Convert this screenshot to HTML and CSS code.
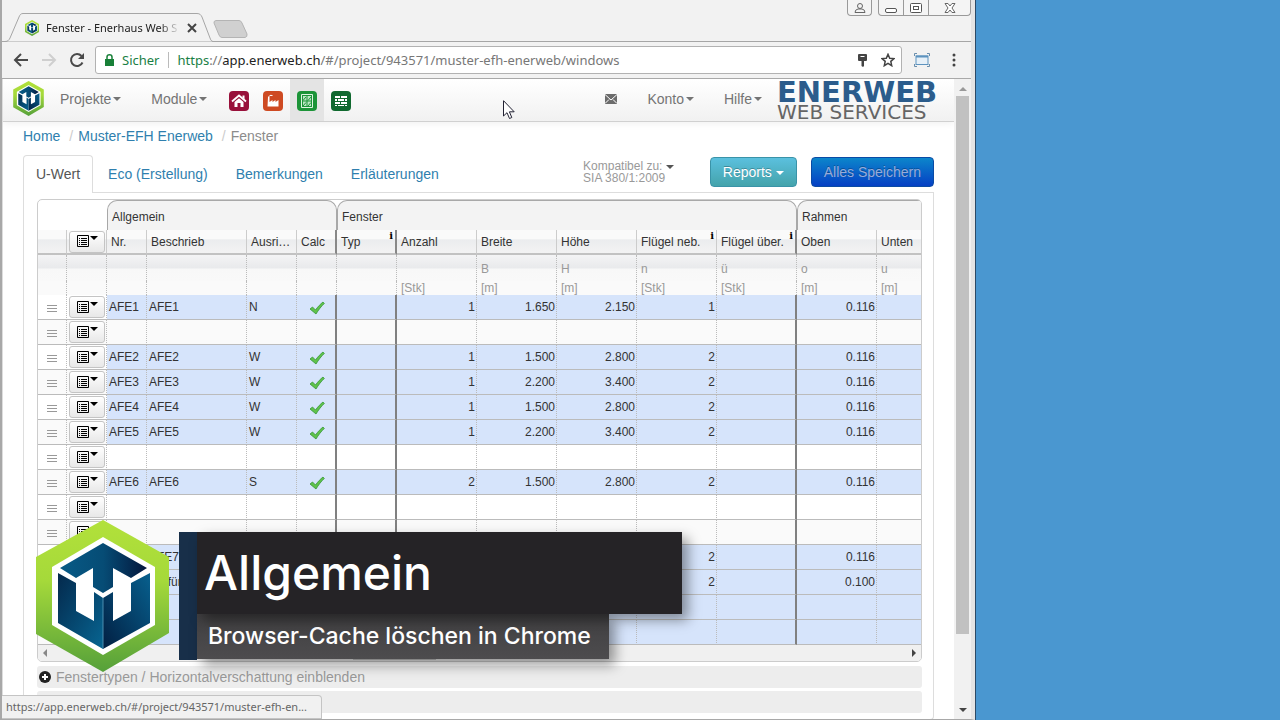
FILE: index.html
```html
<!DOCTYPE html>
<html lang="de">
<head>
<meta charset="utf-8">
<title>Fenster - Enerhaus Web Services</title>
<link rel="stylesheet" href="styles.css">
</head>
<body>
<svg class="defs" aria-hidden="true">
  <defs>
    <linearGradient id="green" x1="0" y1="0" x2="0" y2="1"><stop offset="0" stop-color="#b2e13a"/><stop offset=".4" stop-color="#a5d93a"/><stop offset="1" stop-color="#55a03a"/></linearGradient>
    <linearGradient id="top" x1="0" y1="0" x2="1" y2="0"><stop offset="0" stop-color="#075a86"/><stop offset=".5" stop-color="#064c75"/><stop offset="1" stop-color="#03163c"/></linearGradient>
    <linearGradient id="left" x1="0" y1="0" x2="1" y2="1"><stop offset="0" stop-color="#04294c"/><stop offset="1" stop-color="#076592"/></linearGradient>
    <linearGradient id="right" x1="0" y1="1" x2="1" y2="0"><stop offset="0" stop-color="#021f42"/><stop offset="1" stop-color="#07608e"/></linearGradient>
  </defs>
  <symbol id="logo" viewBox="0 0 133 152">
    <path fill="url(#green)" d="M67 0 133 37V113L67 152 0 114V37z"/>
    <path fill="#fff" d="M67 17 119 47V105L67 135 16 105V47z"/>
    <path fill="url(#top)" d="M67 23 111 48 95 58 77 48V67L67 73 57 67V48L40 58 24 48z"/>
    <path fill="url(#left)" d="M22 53 40 63V91L58 101V72L67 78V129L22 103z"/>
    <path fill="url(#right)" d="M114 53 95 63V91L77 101V72L67 78V129L114 103z"/>
    <path d="M67 78V129" stroke="#4b8eb0" stroke-width="1"/>
  </symbol>
  <symbol id="list" viewBox="0 0 22 13">
    <path fill="none" stroke="#000" d="M.5 1.500h11v11H.5z"/>
    <path stroke="#000" d="M2 4.500h1M4 4.500h6M2 6.500h1M4 6.500h6M2 8.500h1M4 8.500h6M2 10.500h1M4 10.500h6"/>
    <path d="M13 2h8l-4 4z"/>
  </symbol>
  <symbol id="grip" viewBox="0 0 10 9"><path stroke="#999" stroke-width="1" d="M0 1.500h10M0 4.500h10M0 7.500h10"/></symbol>
  <symbol id="check" viewBox="0 0 16 14"><path fill="#5fc24a" stroke="#35953a" stroke-width=".8" d="M1 8 3.500 6 6.500 9C9 5.500 11.500 3 14 1L15.300 2.500C12 5.500 9.500 9 7 13z"/></symbol>
  <symbol id="plus" viewBox="0 0 12 12"><circle cx="6" cy="6" r="6" fill="#222"/><path stroke="#fff" stroke-width="2" d="M3 6h6M6 3v6"/></symbol>
</svg>

<div class="desktop">
<div class="window">
  <header class="titlebar">
    <div class="tab">
      <svg class="tab-shape" viewBox="0 0 210 29" preserveAspectRatio="none" aria-hidden="true"><path fill="#f2f2f2" stroke="#a6a6a6" d="M0 28.500H2C5 28.500 6 27 7 25L16 4C17 1.500 18 .5 20 .5H194C197 .5 198 2 199 4L207 25C208 28 209 28.500 211 28.500"/></svg>
      <svg class="favicon" aria-hidden="true"><use href="#logo"/></svg>
      <span class="tab-title">Fenster - Enerhaus Web S</span>
      <button class="plain" aria-label="Tab schliessen"><svg width="10" height="10" viewBox="0 0 10 10"><path stroke="#444" stroke-width="2" d="M1 1 9 9M9 1 1 9"/></svg></button>
    </div>
    <button class="plain new-tab" aria-label="Neuer Tab"><svg width="35" height="18" viewBox="0 0 35 18"><path fill="#d0d0d0" stroke="#b4b4b4" d="M3 .5H26Q28 .5 29 3L34 14Q34.500 17 32 17.500H9Q7 17.500 6 15L1 3Q.5 1 3 .5z"/></svg></button>
    <div class="win-controls">
      <button class="win-btn user" aria-label="Benutzer"><svg width="12" height="12" viewBox="0 0 12 12" fill="none" stroke="#666"><circle cx="6" cy="4" r="2.500"/><path d="M1 10.500Q1 7.500 4 7H8Q11 7.500 11 10.500z"/></svg></button>
      <div class="win-group">
        <button class="win-btn" aria-label="Minimieren"><svg width="12" height="12" viewBox="0 0 12 12"><rect x=".5" y="6.500" width="11" height="4" rx="1.500" fill="#fff" stroke="#555"/></svg></button>
        <button class="win-btn" aria-label="Maximieren"><svg width="12" height="12" viewBox="0 0 12 12" fill="#fff" stroke="#555"><rect x=".5" y="1.500" width="11" height="9" rx="1"/><rect x="3.500" y="4.500" width="5" height="3"/></svg></button>
        <button class="win-btn close" aria-label="Schliessen"><svg width="12" height="12" viewBox="0 0 12 12" fill="#fff" stroke="#666"><path d="M1 1.500H4L6 4 8 1.500H11L8 6 11 10.500H8L6 8 4 10.500H1L4 6z"/></svg></button>
      </div>
    </div>
  </header>

  <div class="toolbar">
    <button class="plain" aria-label="Zurück"><svg width="16" height="16" viewBox="0 0 16 16" fill="none" stroke="#4a4a4a" stroke-width="2"><path d="M15 8H2M8 2 2 8l6 6"/></svg></button>
    <button class="plain" aria-label="Vorwärts"><svg width="16" height="16" viewBox="0 0 16 16" fill="none" stroke="#cfcfcf" stroke-width="2"><path d="M1 8H14M8 2l6 6-6 6"/></svg></button>
    <button class="plain" aria-label="Neu laden"><svg width="16" height="16" viewBox="0 0 16 16"><path fill="none" stroke="#4a4a4a" stroke-width="2" d="M13.500 10.500A6 6 0 1 1 12.500 4"/><path fill="#4a4a4a" d="M15 1V7H9z"/></svg></button>
    <div class="omnibox">
      <svg width="9" height="12" viewBox="0 0 9 12" aria-hidden="true"><path fill="#188038" d="M0 5H9V12H0z"/><path fill="none" stroke="#188038" stroke-width="1.500" d="M2 5V3A2.500 2.200 0 0 1 7 3V5"/></svg>
      <span class="secure">Sicher</span>
      <span class="url"><span class="scheme">https</span>://<span class="host">app.enerweb.ch</span>/#/project/943571/muster-efh-enerweb/windows</span>
      <button class="plain" aria-label="Passwort"><svg width="9" height="13" viewBox="0 0 9 13"><path fill="#444" d="M1 0H8Q9 0 9 1V6Q9 7 8 7H6V12L5 13 3.500 12V7H1Q0 7 0 6V1Q0 0 1 0z"/><path stroke="#fff" d="M2.500 2.500h4"/></svg></button>
      <button class="plain" aria-label="Lesezeichen"><svg width="14" height="14" viewBox="0 0 14 14"><path fill="none" stroke="#444" stroke-width="1.500" d="M7 1.300 8.700 5.200 13 5.600 9.800 8.400 10.700 12.700 7 10.400 3.300 12.700 4.200 8.400 1 5.600 5.300 5.200z"/></svg></button>
    </div>
    <button class="plain" aria-label="Bildschirmfoto"><svg width="16" height="14" viewBox="0 0 16 14" fill="none"><rect x="2" y="3" width="12" height="8.500" fill="#e6f0f8" stroke="#5d93bf"/><path stroke="#5d93bf" stroke-width="2" d="M2 3.500h12"/><path stroke="#6a8eac" d="M.5 3V.5H3M13 .5h2.500V3M.5 11v2.500H3M13 13.500h2.500V11"/></svg></button>
    <button class="plain menu" aria-label="Menü"><svg width="4" height="14" viewBox="0 0 4 14" fill="#444"><circle cx="2" cy="2" r="1.500"/><circle cx="2" cy="7" r="1.500"/><circle cx="2" cy="12" r="1.500"/></svg></button>
  </div>

  <div class="viewport">
    <div class="page">
      <nav class="navbar">
        <a href="#" class="brand" aria-label="Startseite"><svg width="31" height="35"><use href="#logo"/></svg></a>
        <a href="#" class="nav-item">Projekte<i class="caret"></i></a>
        <a href="#" class="nav-item">Module<i class="caret"></i></a>
        <a href="#" class="nav-icon" aria-label="Haus"><svg width="20" height="20" viewBox="0 0 20 20"><rect width="20" height="20" rx="4" fill="#98103a"/><path fill="none" stroke="#fff" stroke-width="1.800" d="M3 10.500 10 4.500l7 6"/><path fill="#fff" d="M13.500 4.500h2v4l-2-2zM5.500 11 10 7.200l4.500 3.800V16h-3v-4h-3v4h-3z"/></svg></a>
        <a href="#" class="nav-icon" aria-label="Fabrik"><svg width="20" height="20" viewBox="0 0 20 20"><rect width="20" height="20" rx="4" fill="#ce4a22"/><path fill="#fff" d="M5 6h1.500v5l3-2v2l3-2v2l3-2v6.500H4.500z"/><path stroke="#fff" fill="none" d="M5.500 6Q6.500 3.500 9.500 4.500"/></svg></a>
        <a href="#" class="nav-icon active" aria-label="Fenster"><svg width="20" height="20" viewBox="0 0 20 20"><rect width="20" height="20" rx="4" fill="#1c9438"/><path fill="none" stroke="#dff5e2" d="M4.500 3.500h11v13h-11z"/><path fill="#b9e6c2" d="M6 5h3.500v4.500H6zM10.500 5H14v4.500h-3.500zM6 10.500h3.500V15H6zM10.500 10.500H14V15h-3.500z"/><path stroke="#1c9438" d="M6 9.500 9 6M11 9.500 14 6M6 15l3-3.500M11 15l3-3.500"/></svg></a>
        <a href="#" class="nav-icon" aria-label="Bauteile"><svg width="20" height="20" viewBox="0 0 20 20"><rect width="20" height="20" rx="4" fill="#10692f"/><path fill="#fff" d="M4 5h5v2H4zM10 5h6v2h-6zM4 8h2v2H4zM7 8h6v2H7zM14 8h2v2h-2zM4 11h5v2H4zM10 11h6v2h-6zM4 14h2v1H4zM7 14h6v1H7zM14 14h2v1h-2z"/></svg></a>
        <span class="spacer"></span>
        <a href="#" class="nav-item" aria-label="Nachrichten"><svg width="12" height="10" viewBox="0 0 12 10"><path fill="#6c6c6c" d="M0 0h12v10H0z"/><path fill="none" stroke="#fff" d="M0 .5 6 6l6-5.500M0 9.500l4-4M12 9.500l-4-4"/></svg></a>
        <a href="#" class="nav-item">Konto<i class="caret"></i></a>
        <a href="#" class="nav-item">Hilfe<i class="caret"></i></a>
        <div class="wordmark"><span class="word-top">ENERWEB</span><span class="word-sub">WEB SERVICES</span></div>
      </nav>

      <main class="content">
        <div class="crumbs"><a href="#">Home</a><span class="sep">/</span><a href="#">Muster-EFH Enerweb</a><span class="sep">/</span><span class="here">Fenster</span></div>
        <div class="tabs">
          <a href="#" class="page-tab current">U-Wert</a>
          <a href="#" class="page-tab">Eco (Erstellung)</a>
          <a href="#" class="page-tab">Bemerkungen</a>
          <a href="#" class="page-tab">Erläuterungen</a>
          <div class="actions">
            <button class="plain compat">Kompatibel zu: <i class="caret"></i><br>SIA 380/1:2009</button>
            <button class="btn info">Reports <i class="caret"></i></button>
            <button class="btn primary">Alles Speichern</button>
          </div>
        </div>
        <section class="panel">
          <div class="grid">
            <table>
              <colgroup><col class="c30"><col class="c40"><col class="c40"><col class="c100"><col class="c50"><col class="c40"><col class="c60"><col class="c80"><col class="c80"><col class="c80"><col class="c80"><col class="c80"><col class="c80"><col></colgroup>
              <thead>
                <tr class="groups"><td colspan="2"></td><th colspan="4">Allgemein</th><th colspan="6">Fenster</th><th colspan="2" class="cut">Rahmen</th></tr>
                <tr class="cols"><th></th><th class="menu-cell"><button class="rowbtn" aria-label="Tabellenmenü"><svg width="22" height="13"><use href="#list"/></svg></button></th><th>Nr.</th><th>Beschrieb</th><th>Ausri…</th><th class="t">Calc</th><th class="t">Typ<b class="hint">i</b></th><th>Anzahl</th><th>Breite</th><th>Höhe</th><th>Flügel neb.<b class="hint">i</b></th><th class="t">Flügel über.<b class="hint">i</b></th><th>Oben</th><th>Unten</th></tr>
                <tr class="symbols"><td></td><td></td><td></td><td></td><td></td><td></td><td></td><td></td><td>B</td><td>H</td><td>n</td><td>ü</td><td>o</td><td>u</td></tr>
                <tr class="units"><td></td><td></td><td></td><td></td><td></td><td></td><td></td><td>[Stk]</td><td>[m]</td><td>[m]</td><td>[Stk]</td><td>[Stk]</td><td>[m]</td><td>[m]</td></tr>
              </thead>
              <tbody>
                <tr class="f"><td><svg class="grip"><use href="#grip"/></svg></td><td><button class="rowbtn" aria-label="Zeilenmenü"><svg width="22" height="13"><use href="#list"/></svg></button></td><td>AFE1</td><td>AFE1</td><td>N</td><td><svg class="check"><use href="#check"/></svg></td><td></td><td>1</td><td>1.650</td><td>2.150</td><td>1</td><td></td><td>0.116</td><td></td></tr>
                <tr><td><svg class="grip"><use href="#grip"/></svg></td><td><button class="rowbtn" aria-label="Zeilenmenü"><svg width="22" height="13"><use href="#list"/></svg></button></td><td></td><td></td><td></td><td></td><td></td><td></td><td></td><td></td><td></td><td></td><td></td><td></td></tr>
                <tr class="f"><td><svg class="grip"><use href="#grip"/></svg></td><td><button class="rowbtn" aria-label="Zeilenmenü"><svg width="22" height="13"><use href="#list"/></svg></button></td><td>AFE2</td><td>AFE2</td><td>W</td><td><svg class="check"><use href="#check"/></svg></td><td></td><td>1</td><td>1.500</td><td>2.800</td><td>2</td><td></td><td>0.116</td><td></td></tr>
                <tr class="f"><td><svg class="grip"><use href="#grip"/></svg></td><td><button class="rowbtn" aria-label="Zeilenmenü"><svg width="22" height="13"><use href="#list"/></svg></button></td><td>AFE3</td><td>AFE3</td><td>W</td><td><svg class="check"><use href="#check"/></svg></td><td></td><td>1</td><td>2.200</td><td>3.400</td><td>2</td><td></td><td>0.116</td><td></td></tr>
                <tr class="f"><td><svg class="grip"><use href="#grip"/></svg></td><td><button class="rowbtn" aria-label="Zeilenmenü"><svg width="22" height="13"><use href="#list"/></svg></button></td><td>AFE4</td><td>AFE4</td><td>W</td><td><svg class="check"><use href="#check"/></svg></td><td></td><td>1</td><td>1.500</td><td>2.800</td><td>2</td><td></td><td>0.116</td><td></td></tr>
                <tr class="f"><td><svg class="grip"><use href="#grip"/></svg></td><td><button class="rowbtn" aria-label="Zeilenmenü"><svg width="22" height="13"><use href="#list"/></svg></button></td><td>AFE5</td><td>AFE5</td><td>W</td><td><svg class="check"><use href="#check"/></svg></td><td></td><td>1</td><td>2.200</td><td>3.400</td><td>2</td><td></td><td>0.116</td><td></td></tr>
                <tr><td><svg class="grip"><use href="#grip"/></svg></td><td><button class="rowbtn" aria-label="Zeilenmenü"><svg width="22" height="13"><use href="#list"/></svg></button></td><td></td><td></td><td></td><td></td><td></td><td></td><td></td><td></td><td></td><td></td><td></td><td></td></tr>
                <tr class="f"><td><svg class="grip"><use href="#grip"/></svg></td><td><button class="rowbtn" aria-label="Zeilenmenü"><svg width="22" height="13"><use href="#list"/></svg></button></td><td>AFE6</td><td>AFE6</td><td>S</td><td><svg class="check"><use href="#check"/></svg></td><td></td><td>2</td><td>1.500</td><td>2.800</td><td>2</td><td></td><td>0.116</td><td></td></tr>
                <tr><td><svg class="grip"><use href="#grip"/></svg></td><td><button class="rowbtn" aria-label="Zeilenmenü"><svg width="22" height="13"><use href="#list"/></svg></button></td><td></td><td></td><td></td><td></td><td></td><td></td><td></td><td></td><td></td><td></td><td></td><td></td></tr>
                <tr><td><svg class="grip"><use href="#grip"/></svg></td><td><button class="rowbtn" aria-label="Zeilenmenü"><svg width="22" height="13"><use href="#list"/></svg></button></td><td></td><td></td><td></td><td></td><td></td><td></td><td></td><td></td><td></td><td></td><td></td><td></td></tr>
                <tr class="f"><td></td><td></td><td></td><td>AFE7</td><td></td><td></td><td></td><td></td><td></td><td></td><td>2</td><td></td><td>0.116</td><td></td></tr>
                <tr class="f"><td></td><td></td><td></td><td>AF für</td><td></td><td></td><td></td><td></td><td></td><td></td><td>2</td><td></td><td>0.100</td><td></td></tr>
                <tr class="f"><td></td><td></td><td></td><td></td><td></td><td></td><td></td><td></td><td></td><td></td><td></td><td></td><td></td><td></td></tr>
                <tr class="f"><td></td><td></td><td></td><td></td><td></td><td></td><td></td><td></td><td></td><td></td><td></td><td></td><td></td><td></td></tr>
              </tbody>
            </table>
            <div class="hscroll"><i class="arrow-left"></i><i class="hthumb"></i><i class="arrow-right"></i></div>
          </div>
          <button class="fold"><svg width="12" height="12"><use href="#plus"/></svg>Fenstertypen / Horizontalverschattung einblenden</button>
          <button class="fold" aria-label="Weitere einblenden"><svg width="12" height="12"><use href="#plus"/></svg></button>
        </section>
      </main>
    </div>
    <div class="vscroll"><i class="arrow-up"></i><i class="vthumb"></i><i class="arrow-down"></i></div>
  </div>
  <div class="status">https://app.enerweb.ch/#/project/943571/muster-efh-en...</div>
</div>
</div>

<svg class="pointer" width="12" height="20" viewBox="0 0 12 20" aria-hidden="true"><path fill="#fff" stroke="#223" d="M.5.7V16L4 12.700 6.500 18.500 8.800 17.500 6.400 11.800H11.200z"/></svg>

<svg class="big-logo" width="133" height="152" aria-hidden="true"><use href="#logo"/></svg>
<div class="banner">
  <div class="banner-title">Allgemein</div>
  <div class="banner-sub">Browser-Cache löschen in Chrome</div>
</div>
</body>
</html>
```

FILE: styles.css
```css
* { box-sizing: border-box; }
body { margin: 0; background: #4a97d0; font: 14px/20px "Liberation Sans", Arial, sans-serif; color: #333; overflow: hidden; }
a { color: #2f7fae; text-decoration: none; }
svg { display: block; flex: none; }
.defs { position: absolute; width: 0; height: 0; }
.plain { border: 0; padding: 0; margin: 0; background: none; font: inherit; color: inherit; display: block; }
.desktop { display: flex; height: 100vh; padding-right: 305px; }
.window { position: relative; flex: 1; min-width: 0; display: flex; flex-direction: column; background: #f2f2f2; border: solid #a8a8a8; border-width: 0 4px 1px 2px; border-right-color: #e4e4e4; box-shadow: 1px 0 #2c4a66; }
.caret { display: inline-block; border: 4px solid transparent; border-top-color: currentColor; border-bottom: 0; vertical-align: middle; }

/* Window title bar */
.titlebar { display: flex; height: 42px; border-bottom: 1px solid #a6a6a6; }
.tab { position: relative; display: flex; align-items: center; width: 210px; height: 29px; margin: 13px 0 0 1px; padding: 0 16px 0 22px; gap: 7px; }
.tab-shape { position: absolute; inset: 0; width: 100%; height: 100%; }
.favicon { position: relative; width: 14px; height: 16px; }
.tab-title { position: relative; flex: 1; overflow: hidden; white-space: nowrap; font: 11px/16px "Noto Sans", sans-serif; color: #222; -webkit-mask-image: linear-gradient(90deg, #000 85%, transparent); mask-image: linear-gradient(90deg, #000 85%, transparent); }
.tab .plain { position: relative; }
.new-tab { align-self: flex-start; margin-top: 20px; }
.win-controls { display: flex; gap: 6px; margin-left: auto; height: 16px; }
.win-btn { display: flex; align-items: center; justify-content: center; width: 25px; height: 16px; padding: 0; background: #f4f4f4; border: 1px solid #999; border-top: 0; border-radius: 0 0 4px 4px; }
.win-group { display: flex; }
.win-group .win-btn { border-radius: 0; border-left: 0; }
.win-group .win-btn:first-child { border-left: 1px solid #999; border-bottom-left-radius: 4px; width: 26px; }
.win-group .win-btn.close { width: 42px; border-bottom-right-radius: 4px; }

/* Address bar */
.toolbar { display: flex; align-items: center; gap: 12px; height: 37px; padding: 0 15px 0 11px; border-bottom: 1px solid #a9a9a9; }
.omnibox { flex: 1; display: flex; align-items: center; height: 28px; margin-left: -2px; padding: 0 6px 0 9px; background: #fff; border: 1px solid #b2b2b2; border-radius: 3px; font: 13px/20px "Noto Sans", sans-serif; color: #777; }
.secure { color: #1a8045; margin: 0 8px; padding-right: 9px; border-right: 1px solid #bbb; line-height: 16px; }
.url { flex: 1; white-space: nowrap; }
.scheme { color: #1a8045; }
.host { color: #222; }
.omnibox .plain + .plain { margin-left: 14px; }
.toolbar .menu { margin-left: 10px; }

/* Page area */
.viewport { flex: 1; min-height: 0; display: flex; border-left: 1px solid #ddd; background: #fff; }
.page { flex: 1; min-width: 0; overflow: hidden; }
.navbar { display: flex; align-items: stretch; height: 43px; padding: 0 9px 0 10px; border-bottom: 1px solid #d0d0d0; background: linear-gradient(#fff, #f1f1f1); box-shadow: 0 1px 8px rgba(0,0,0,.07); }
.navbar a { display: flex; align-items: center; color: #747474; }
.navbar .caret { margin-left: 2px; }
.navbar .nav-item { padding: 0 15px 2px; }
.navbar .brand { margin-right: 1px; padding-bottom: 3px; }
.navbar .nav-icon { padding: 1px 7px 0; }
.navbar .active { background: #e4e4e4; }
.spacer { flex: 1; }
.wordmark { display: flex; flex-direction: column; width: 168px; padding-top: 1px; white-space: nowrap; }
.word-top { font: bold 29px/24px "DejaVu Sans", sans-serif; color: #2b5c8c; }
.word-sub { font: 20px/16px "DejaVu Sans", sans-serif; color: #656565; }
.content { padding: 4px 20px 0; }
.crumbs { display: flex; }
.sep { color: #ccc; margin: 0 5px 0 9px; }
.here { color: #8c8c8c; }
.tabs { display: flex; align-items: flex-end; height: 47px; border-bottom: 1px solid #ddd; }
.page-tab { height: 37px; padding: 8px 12px; margin-right: 2px; border: 1px solid transparent; border-bottom: 0; border-radius: 4px 4px 0 0; white-space: nowrap; }
.page-tab.current { height: 38px; margin-bottom: -1px; color: #555; background: #fff; border-color: #ddd; }
.actions { display: flex; align-items: flex-start; margin-left: auto; margin-bottom: 5px; }
.compat { color: #999; font-size: 12px; line-height: 12px; text-align: left; margin: 3px 36px 0 0; }
.compat .caret { color: #555; }
.btn { height: 30px; padding: 0 12px; border: 1px solid #3a93a8; border-radius: 4px; font: inherit; color: #fff; text-shadow: 0 -1px rgba(0,0,0,.25); white-space: nowrap; }
.info { background: linear-gradient(#5bc0de, #44a3ab); margin-right: 14px; }
.primary { color: #98abd8; border-color: #0a4ba5; background: linear-gradient(#0c86cb, #0540c4); }
.panel { padding: 6px 11px 3px 13px; border: 1px solid #ddd; border-top: 0; border-radius: 0 0 4px 4px; }

/* Window table */
.grid { border: 1px solid #ccc; border-radius: 5px; overflow: hidden; margin-bottom: 4px; }
table { table-layout: fixed; width: 100%; border-collapse: separate; border-spacing: 0; font-size: 12px; line-height: 16px; }
.c30 { width: 29px; } .c40 { width: 40px; } .c50 { width: 50px; } .c60 { width: 60px; } .c80 { width: 80px; } .c100 { width: 100px; }
td, th { padding: 0; font-weight: normal; text-align: left; white-space: nowrap; overflow: hidden; }
.groups td, .groups th { height: 30px; }
.groups th { padding: 2px 0 0 4px; border: 1px solid #a8a8a8; border-bottom: 0; border-radius: 10px 10px 0 0; background: #f3f3f3; }
.groups .cut { border-right: 0; border-top-right-radius: 0; }
.cols th { position: relative; height: 25px; padding-left: 4px; border-right: 1px solid #ccc; border-bottom: 2px solid #c2c2c2; background: linear-gradient(#fafafa 40%, #ebecee 42%, #f3f3f3); }
.cols .menu-cell { padding-left: 0; }
.cols .t { border-right: 2px solid #888; }
.hint { position: absolute; right: 2px; top: 0; font: bold 10px/11px "DejaVu Serif", serif; color: #000; }
.symbols td, .units td { padding-left: 4px; color: #999; border-right: 1px dotted #bbb; }
.symbols td { height: 26px; padding-top: 2px; background: linear-gradient(#f4f4f5, #e9eaec 48%, #f8f8f8 56%, #f9f9f9); }
.units td { height: 14px; line-height: 14px; background: #fafafa; }
tbody td { height: 25px; padding: 0 2px; border-right: 1px dotted #bbb; border-bottom: 1px solid #bbb; background: #fff; }
tbody tr:nth-child(even) td { background: #fafafa; }
tbody .f td:nth-child(n+3), tbody .f:nth-child(even) td:nth-child(n+3) { background: #d6e4fb; }
tbody td:nth-child(6), tbody td:nth-child(7), tbody td:nth-child(12) { border-right: 2px solid #808080; }
tbody td:nth-child(n+8) { text-align: right; padding: 0 1px; }
td:last-child, .cols th:last-child { border-right: 0; }
.grip { width: 10px; height: 9px; margin: 2px auto 0; }
.check { width: 16px; height: 14px; margin: 2px 0 0 10px; }
.rowbtn { display: flex; align-items: center; justify-content: center; width: 36px; height: 22px; margin: 0 auto; padding: 0 0 2px 2px; border: 1px solid #c4c4c4; border-radius: 3px; background: linear-gradient(#fff, #e8e8e8); }
tbody td:nth-child(2) { padding: 0; }
.hscroll { display: flex; align-items: center; height: 16px; padding: 0 5px; background: #f0f0f0; }
.hthumb { width: 83px; height: 14px; margin: 0 auto 0 35%; background: #c4c4c4; }
.arrow-left, .arrow-right { border: 4px solid transparent; }
.arrow-left { border-right-color: #888; border-left: 0; }
.arrow-right { border-left-color: #444; border-right: 0; }
.fold { display: flex; align-items: center; gap: 5px; width: 100%; height: 22px; margin: 0 0 3px; padding: 0 2px; border: 0; border-radius: 3px; background: #ededed; font: inherit; color: #999; }

/* Page scrollbar */
.vscroll { flex: none; width: 17px; display: flex; flex-direction: column; align-items: center; padding: 8px 0 7px; background: #f1f1f1; }
.vthumb { width: 13px; height: 86%; margin: 5px 0 auto; background: #c1c1c1; }
.arrow-up { border: 4px solid transparent; border-bottom-color: #999; border-top: 0; }
.arrow-down { border: 4px solid transparent; border-top-color: #444; border-bottom: 0; }
.status { position: absolute; left: 0; bottom: 0; padding: 2px 14px 2px 4px; border: 1px solid #c4c4c4; border-left: 0; border-radius: 0 4px 0 0; background: #f1f1f1; color: #666; font: 11px/18px "Noto Sans", sans-serif; white-space: nowrap; }

/* Items floating over the desktop */
.pointer { position: absolute; left: 503px; top: 100px; }
.big-logo { position: absolute; left: 36px; bottom: 48px; }
.banner { position: absolute; left: 179px; bottom: 60px; display: flex; flex-direction: column; align-items: flex-start; padding-bottom: 1px; border-left: 18px solid #182f49; font-family: Inter, sans-serif; font-weight: 500; color: #fff; white-space: nowrap; }
.banner-title { position: relative; width: 485px; padding: 11px 7px; background: #252326; font-size: 48px; line-height: 60px; box-shadow: 6px 6px 12px rgba(0,0,0,.4); }
.banner-sub { padding: 8px 18px 9px 11px; background: linear-gradient(#403f41, #4d4c4e); font-size: 23px; line-height: 28px; box-shadow: 6px 6px 12px rgba(0,0,0,.4); }
```
